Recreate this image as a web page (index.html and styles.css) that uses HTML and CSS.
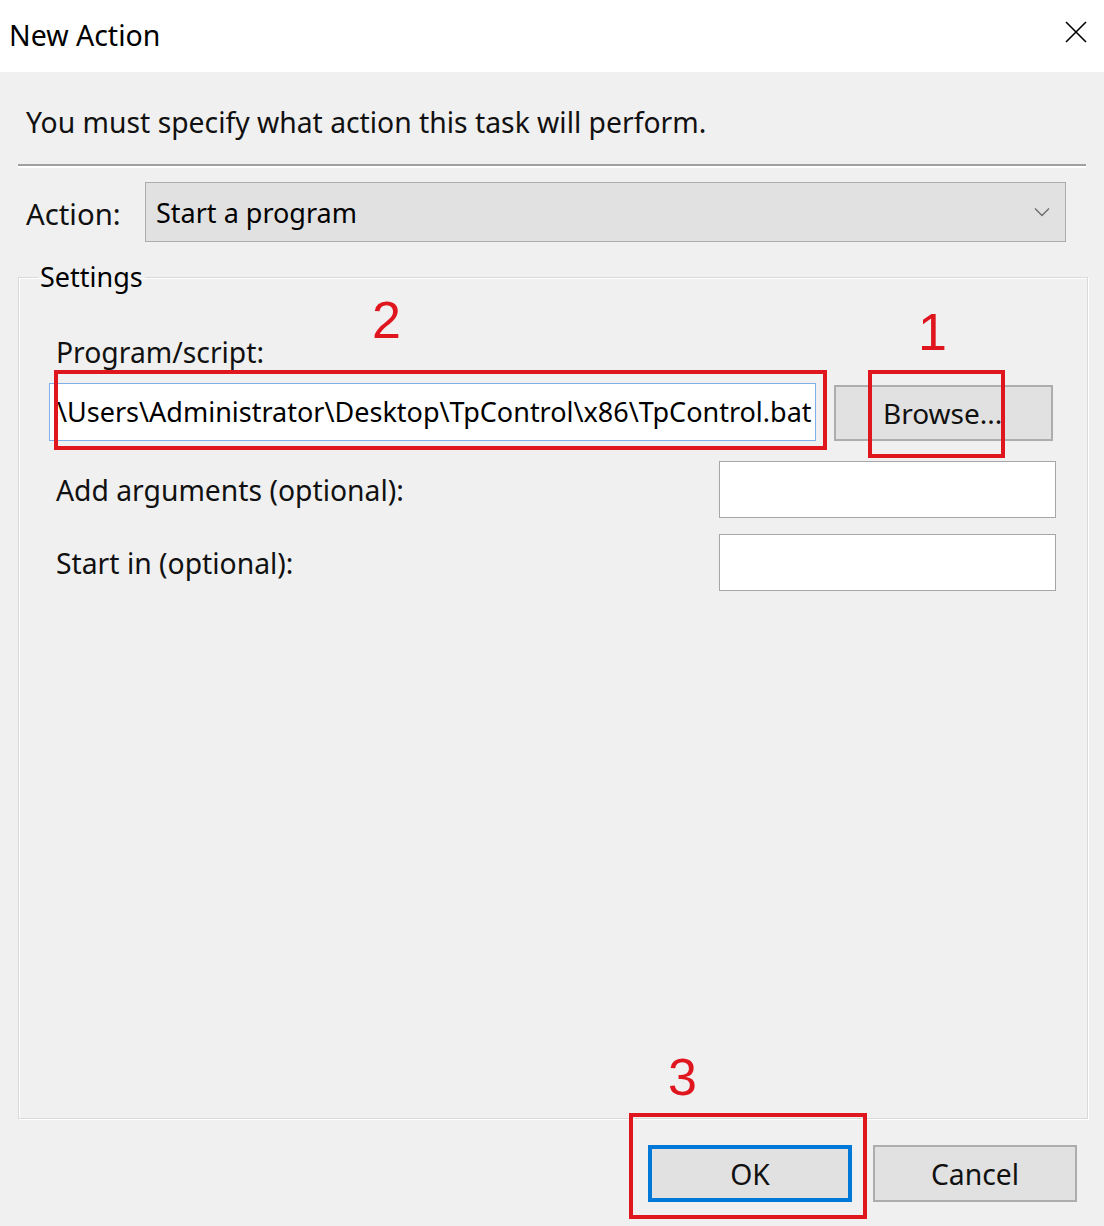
FILE: index.html
```html
<!DOCTYPE html>
<html>
<head>
<meta charset="utf-8">
<link rel="stylesheet" href="styles.css">
</head>
<body>
<div class="dialog">
  <div class="titlebar">
    <span class="title">New Action</span>
    <svg class="close" width="22" height="22" viewBox="0 0 22 22"><path d="M1 1L21 21M21 1L1 21" stroke="#000" stroke-width="1.6" fill="none"/></svg>
  </div>
  <div class="body">
    <p class="intro">You must specify what action this task will perform.</p>
    <div class="separator"></div>
    <div class="action-row">
      <span class="label">Action:</span>
      <div class="combo">
        <span class="combo-text">Start a program</span>
        <svg class="chev" width="16" height="10" viewBox="0 0 16 10"><path d="M1 1.5L8 8.5L15 1.5" stroke="#6d6d6d" stroke-width="1.4" fill="none"/></svg>
      </div>
    </div>
    <fieldset class="group">
      <legend class="legend">Settings</legend>
      <div class="prog-label label">Program/script:</div>
      <div class="prog-row">
        <div class="textbox focus"><span class="path">\Users\Administrator\Desktop\TpControl\x86\TpControl.bat</span></div>
        <div class="btn browse">Browse...</div>
      </div>
      <div class="opt-row first">
        <span class="label">Add arguments (optional):</span>
        <div class="textbox small"></div>
      </div>
      <div class="opt-row">
        <span class="label">Start in (optional):</span>
        <div class="textbox small"></div>
      </div>
    </fieldset>
    <div class="footer">
      <div class="btn ok">OK</div>
      <div class="btn cancel">Cancel</div>
    </div>
  </div>
  <div class="mark box2"></div>
  <div class="mark box1"></div>
  <div class="mark box3"></div>
  <span class="num n2">2</span>
  <span class="num n1">1</span>
  <span class="num n3">3</span>
</div>
</body>
</html>
```
FILE: styles.css
```css
html, body {
  margin: 0;
  padding: 0;
}
body {
  width: 1104px;
  height: 1226px;
  overflow: hidden;
  background: #f0f0f0;
}
.dialog {
  position: relative;
  width: 1104px;
  height: 1226px;
  display: flex;
  flex-direction: column;
}
.titlebar {
  height: 72px;
  background: #ffffff;
  display: flex;
  align-items: center;
  justify-content: space-between;
  padding: 0 17px 0 9px;
  box-sizing: border-box;
}
.title {
  font-family: "Noto Sans", "Open Sans", sans-serif;
  font-size: 28.5px;
  color: #000;
  margin-top: -3px;
}
.close {
  margin-top: -9px;
}
.body {
  flex: 1;
  display: flex;
  flex-direction: column;
  background: #f0f0f0;
}
.intro, .label, .btn {
  font-family: "Noto Sans", "Open Sans", sans-serif;
  color: #111;
  font-size: 28.3px;
}
.intro {
  margin: 0;
  padding: 33px 0 0 26px;
  line-height: 34px;
  height: 59px;
  box-sizing: content-box;
}
.separator {
  margin: 0 18px;
  height: 2px;
  background: #a0a0a0;
  border-bottom: 2px solid #ffffff;
}
.action-row {
  display: flex;
  align-items: center;
  margin: 14px 38px 0 26px;
}
.action-row .label {
  width: 119px;
  font-size: 29.3px;
  margin-top: 4px;
}
.combo {
  flex: 1;
  height: 60px;
  box-sizing: border-box;
  background: #e1e1e1;
  border: 1px solid #adadad;
  display: flex;
  align-items: center;
  justify-content: space-between;
  padding: 0 15px 0 10px;
}
.combo-text, .legend, .path {
  font-family: "Noto Sans", "Open Sans", sans-serif;
  font-size: 27px;
  color: #000;
}
.group {
  margin: 18px 16px 0 18px;
  padding: 0 31px 0 30px;
  height: 859px;
  box-sizing: border-box;
  border: 1px solid #d9d9d9;
  box-shadow: inset 1px 1px 0 #ffffff, 1px 1px 0 #ffffff;
  min-width: 0;
}
.legend {
  padding: 0 2px;
  margin-left: -11px;
  line-height: 34px;
}
.prog-label {
  margin: 41px 0 0 7px;
  line-height: 34px;
}
.prog-row {
  display: flex;
  align-items: center;
  margin-top: 13px;
  gap: 18px;
  padding-right: 3px;
}
.textbox {
  background: #ffffff;
  border: 1px solid #a6a6a6;
  box-sizing: border-box;
}
.textbox.focus {
  width: 767px;
  height: 58px;
  border-color: #7db0e8;
  display: flex;
  align-items: center;
  padding-left: 7px;
  overflow: hidden;
  white-space: nowrap;
}
.btn {
  box-sizing: border-box;
  background: #e1e1e1;
  border: 2px solid #adadad;
  display: flex;
  align-items: center;
  justify-content: center;
}
.browse {
  flex: 1;
  height: 56px;
  justify-content: flex-start;
  padding-left: 47px;
  margin-top: 3px;
  font-size: 28px;
}
.opt-row {
  display: flex;
  align-items: center;
  justify-content: space-between;
  padding-left: 7px;
  margin-top: 16px;
}
.opt-row.first {
  margin-top: 20px;
}
.textbox.small {
  width: 337px;
  height: 57px;
}
.footer {
  display: flex;
  justify-content: flex-end;
  gap: 21px;
  margin: 26px 27px 0 0;
}
.ok, .cancel {
  width: 204px;
  height: 57px;
}
.ok {
  border: 4px solid #0078d7;
}
.mark {
  position: absolute;
  border: 4px solid #e0161f;
  box-sizing: border-box;
}
.box2 { left: 54px; top: 370px; width: 773px; height: 80px; }
.box1 { left: 868px; top: 370px; width: 137px; height: 88px; }
.box3 { left: 629px; top: 1113px; width: 238px; height: 106px; }
.num {
  position: absolute;
  font-family: "Liberation Sans", sans-serif;
  font-size: 52px;
  line-height: 1;
  color: #e0161f;
}
.n2 { left: 372px; top: 294px; }
.n1 { left: 918px; top: 306px; }
.n3 { left: 668px; top: 1051px; }
```
